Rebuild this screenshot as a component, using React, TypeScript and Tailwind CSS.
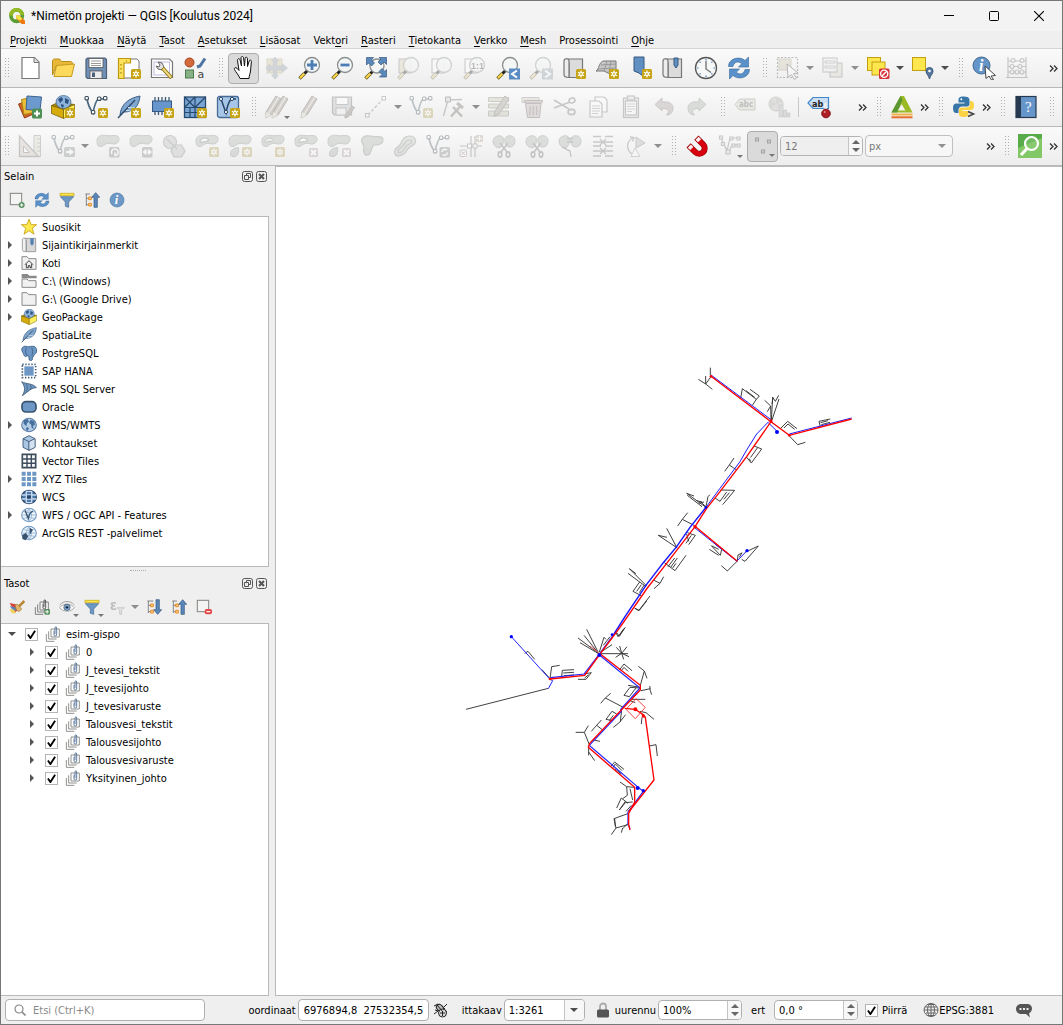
import React from "react";

/* ---------- shared icon fragments ---------- */

const Star = () => (
  <g>
    <rect x="14" y="13" width="10" height="10" rx="1.6" fill="#c7a416" />
    <path d="M19 14.6v6.8M16 16.3l6 3.4M22 16.3l-6 3.4" stroke="#fff" strokeWidth="1.3" />
    <circle cx="19" cy="18" r="1.9" fill="#fff" />
    <circle cx="19" cy="18" r="0.9" fill="#c7a416" />
  </g>
);
const Cross = () => (
  <g>
    <rect x="15" y="14" width="9" height="9" rx="1.5" fill="#c29a9a" />
    <path d="M17 16l5 5M22 16l-5 5" stroke="#fff" strokeWidth="2" />
  </g>
);
const Lens = ({ cx = 14, cy = 9, r = 7.5 }: { cx?: number; cy?: number; r?: number }) => (
  <g>
    <path d="M1.5 22.5l5-5" stroke="#6b5b14" strokeWidth="3.4" />
    <path d="M2 22l4.5-4.5" stroke="#fcd94f" strokeWidth="2" />
    <path d="M6.5 17.5l2.8-2.8" stroke="#222" strokeWidth="3" />
    <circle cx={cx} cy={cy} r={r} fill="#f4f6f6" fillOpacity="0.88" stroke="#8a8f8f" strokeWidth="1.3" />
  </g>
);
const Nodes = () => (
  <g>
    <path d="M3 4c1 6 3 10 6 14 1-5 2-11 5-14h6" fill="none" stroke="#4b6a80" strokeWidth="1.7" />
    <g fill="#fff" stroke="#3b4b58" strokeWidth="1.1">
      <rect x="1" y="1.5" width="3.4" height="3.4" rx="1" />
      <rect x="7.4" y="15.5" width="3.4" height="3.4" rx="1" />
      <rect x="13.5" y="2" width="3.4" height="3.4" rx="1" />
      <rect x="19.5" y="1.5" width="3.4" height="3.4" rx="1" />
    </g>
  </g>
);
const Blob = () => (
  <path
    d="M1 6.500C1 2 6 .5 10 1.500c4 1 8-1 11.500.5 3 2.500 1.500 7.500-3 8-3 .3-4.500-1.500-7.500-.5S7 13 4 12.500 1 9.500 1 6.500z"
    fill="#a9b4a3" stroke="#7c8484" strokeWidth="1"
  />
);
const Ring = () => (
  <g>
    <Blob />
    <path d="M5 7c1-3 4-3.500 7-2.500s1 3-2 3-5 2.500-5-.5z" fill="#fff" stroke="#6c7474" strokeWidth="1.200" />
  </g>
);
const Part = () => <path d="M2.500 20c0-4 3-6 8-6.500 1 5-1 9-4.500 9s-3.500-1-3.500-2.500z" fill="#a9b3a4" stroke="#7c8484" strokeWidth="1" />;
const Sheet = () => <path d="M4 1.500h12.500l4.500 4.500v16.500H4z" fill="#fff" stroke="#777" strokeWidth="1.2" />;
const Book = () => (
  <g>
    <path d="M4 3h16.500v18.500H7V7H4z" fill="#dcdcdc" stroke="#777" strokeWidth="1.2" />
    <path d="M7 21.500c-4 0-5-1-5-3V5c0-3 5-3 5 0z" fill="#ececec" stroke="#777" strokeWidth="1.2" />
  </g>
);
const Globe = () => (
  <g>
    <ellipse cx="12" cy="12" rx="11" ry="10" fill="#b4cde7" stroke="#5b7ca5" strokeWidth="1.600" />
    <path d="M4 5l6-2 2 4-3 2-1 5-4-4zM14 4l6 2 1 6-3 1 1 5-3-2-1-5-3-2zM9 15l3 2-2 4-3-3z" fill="#46719f" />
  </g>
);
const Grid2 = () => (
  <path d="M12 2v20M2 12h20M4 7q8 3 16 0M4 17q8-3 16 0M12 2q-8 10 0 20M12 2q8 10 0 20" fill="none" stroke="#8db1d6" strokeWidth="1.200" />
);
const Refresh = () => (
  <g fill="#5a91cb" stroke="#34659b" strokeWidth="0.600">
    <path d="M1.500 10.500c0-8 11-11 16.500-6l3.500-3.500v10h-10l3.300-3.300c-3.500-3-8-1.700-8.800 2.800z" />
    <path d="M22.500 13.500c0 8-11 11-16.500 6L2.500 23V13h10l-3.300 3.300c3.500 3 8 1.700 8.800-2.800z" />
  </g>
);
const Feather = () => (
  <g>
    <path d="M3 20C4 9 12 3 23 1c-1 10-6 16-16 16z" fill="#7fa6cf" stroke="#3d5f86" strokeWidth="1" />
    <path d="M1 23L18 5" stroke="#2e4a69" strokeWidth="1.300" />
    <path d="M9 15.500l5 .5M11 12.500l7 .5" stroke="#d3e2f0" strokeWidth="1" />
  </g>
);
const Box = () => (
  <g stroke="#6e5a00" strokeWidth="0.700">
    <path d="M0.500 10.500L8 7l15.500 2.500-11 5z" fill="#a68a12" />
    <ellipse cx="12.500" cy="7" rx="7.500" ry="6.500" fill="#8fb4dc" stroke="#3f6490" />
    <path d="M7 4l4-2 1 3-3 3zM14 3l4 2-1 4-3-1zM10 9l3 1-1 3-2-2z" fill="#2f5380" stroke="none" />
    <path d="M0.500 10.500l12 4v9l-12-5z" fill="#d6ac0c" />
    <path d="M12.500 14.500l11-5v8.500l-11 5.500z" fill="#fdf05c" />
  </g>
);
const Pencil = ({ x = 0 }: { x?: number }) => (
  <g transform={`translate(${x} 0)`}>
    <path d="M4 17L14 1l5 3L9 20l-6 3z" fill="#a08c76" stroke="#5d5146" />
    <path d="M6.500 18.500L16.500 2.500" stroke="#d8d0bf" strokeWidth="1.500" />
    <path d="M3 23l1-6 5 3z" fill="#e4d9bb" />
  </g>
);
const Scissors = () => (
  <g fill="none" stroke="#7d6c6c" strokeWidth="1.600">
    <path d="M8 9l7 9M16 9l-7 9" />
    <ellipse cx="8" cy="20.500" rx="1.800" ry="2.600" />
    <ellipse cx="16" cy="20.500" rx="1.800" ry="2.600" />
  </g>
);
const TwoBlobs = () => (
  <g fill="#aab3aa" stroke="#7c8484">
    <path d="M1 7c0-5 8-7 10-3.500 1 3 0 9-3 10S1 12 1 7zM13 4.500c2-4.500 10-3.500 10 2s-3 6.500-6 6.500-5-5-4-8.500z" />
  </g>
);

const icons: Record<string, React.ReactNode> = {
  new: <><Sheet /><path d="M16 1.500v5h5" fill="#ddd" stroke="#777" /></>,
  open: (
    <>
      <path d="M1.500 5c0-1 1-2 2-2h5l2 2.500h9c1 0 2 1 2 2V10H5L1.500 19z" fill="#e9b83a" stroke="#b98d1a" />
      <path d="M3 20.500L5.500 9.500 23.500 8l-3 12.500z" fill="#fcd95a" stroke="#c49a20" />
    </>
  ),
  save: (
    <>
      <path d="M2 3.500l1.500-1.500H21l1.500 1.500v19H3.500L2 21z" fill="#6f8fb5" stroke="#4c5f78" strokeWidth="1.200" />
      <rect x="5" y="2.500" width="14" height="9" fill="#fff" stroke="#555" strokeWidth="0.800" />
      <path d="M7 5h10M7 7.500h10M7 9.500h10" stroke="#999" />
      <rect x="6" y="15" width="12" height="7.500" fill="#ececec" stroke="#555" strokeWidth="0.800" />
      <rect x="8" y="16.500" width="3" height="4.500" fill="#4c5f78" />
    </>
  ),
  layout: (
    <>
      <path d="M2 3h18l2 2v17H2z" fill="#fff" stroke="#777" />
      <path d="M1.500 2.500h12v4.500H7v15.500H1.500z" fill="#fce15a" stroke="#c09810" strokeWidth="1.200" />
      <path d="M4 8v1.500M4 12v1.500M4 16v1.500M9 5h1" stroke="#927000" />
      <Star />
    </>
  ),
  manager: (
    <>
      <path d="M1.500 3h18l3 3v15.500h-21z" fill="#fff" stroke="#777" strokeWidth="1.200" />
      <rect x="4" y="6" width="15.500" height="13" fill="none" stroke="#bbd" />
      <path d="M8 6l4 1 2 4-2 3-4-1-2-3 3 1 1-2z" fill="#e3e3e3" stroke="#666" />
      <path d="M12.500 12l9 10" stroke="#8a7414" strokeWidth="4" />
      <path d="M13 12.500l8 9" stroke="#ecd57c" strokeWidth="2.200" />
    </>
  ),
  style: (
    <>
      <circle cx="6.500" cy="6.500" r="4.500" fill="#d4693b" stroke="#a3431b" />
      <path d="M14 11l3-1 5-7.500" stroke="#4d75a3" strokeWidth="3" fill="none" />
      <rect x="2.500" y="14" width="8" height="8" fill="#86b286" stroke="#4d7a50" />
      <text x="14.500" y="22" fontSize="11" fontFamily="DejaVu Sans" fill="#444">a</text>
    </>
  ),
  hand: (
    <path
      d="M8 22.500c-1-3-4-6-5.500-9-.6-1.600 1-2.500 2.400-1.300L7 14.500 5.500 4.500c-.3-2 2-2.400 2.500-.6L9.500 10 9 2c0-2 2.400-2 2.600 0L12.500 10l.6-7.500c.2-1.800 2.400-1.600 2.400.2L15.500 10.500l1.700-5.500c.6-1.600 2.500-1 2.200.7L18.500 15c-.3 3-1.500 5-1.500 7.500z"
      fill="#fff" stroke="#111" strokeWidth="1"
    />
  ),
  pan: (
    <>
      <rect x="2" y="3" width="15" height="14" fill="#d9c96e" stroke="#b5a860" />
      <path d="M10 1l3.500 4h-2v5h6V8l5 4-5 4v-2h-6v5h2L10 23l-3.500-4h2v-5h-4v2L1 12l3.500-4v2h4V5h-2z" fill="#8aa0b7" stroke="#6c7f92" strokeWidth="0.600" />
    </>
  ),
  zoomin: <><Lens /><path d="M14 4v10M9 9h10" stroke="#4c7db5" strokeWidth="2.800" /></>,
  zoomout: <><Lens /><path d="M9.500 9h9" stroke="#4c7db5" strokeWidth="2.800" /></>,
  full: (
    <>
      <Lens cx={13} cy={10} r={7} />
      <path d="M2.500 1.500h7L7.500 4l3 3-3 3-3-3-2 2zM22.500 1.500v7L20 6l-3 3-3-3 3-3-2-1.500zM22.500 21h-7l2.500-2.500-3-3 3-3 3 3 1.500-2z" fill="#5b88bb" stroke="#34577f" strokeWidth="0.700" />
    </>
  ),
  zoomsel: <><rect x="2" y="3" width="12" height="14" fill="#ded08c" stroke="#777" /><Lens /></>,
  zoomlayer: <><rect x="2" y="3" width="12" height="14" fill="#fff" stroke="#777" /><Lens /></>,
  zoom1: (
    <>
      <rect x="2" y="3" width="12" height="14" fill="#fff" stroke="#777" />
      <Lens />
      <text x="8" y="12.500" fontSize="9" fontWeight="bold" fontFamily="Liberation Sans" fill="#444">1:1</text>
    </>
  ),
  zoomprev: (
    <>
      <Lens /><rect x="13" y="12.500" width="11" height="11" fill="#5b8cc4" />
      <path d="M21 14.500L16 18l5 3.500" fill="none" stroke="#fff" strokeWidth="2" />
    </>
  ),
  zoomnext: (
    <>
      <Lens /><rect x="13" y="12.500" width="11" height="11" fill="#8a9fb7" />
      <path d="M16 14.500l5 3.500-5 3.500" fill="none" stroke="#fff" strokeWidth="2" />
    </>
  ),
  mapview: <><Book /><Star /></>,
  map3d: (
    <>
      <path d="M1 15c3-1 3-10 8-10h12v9l-6 4-6-3z" fill="#c6c6c6" stroke="#777" />
      <path d="M6 9l15-1M3 13l18-1M12 5l-3 10M16 5l-2 11" stroke="#999" fill="none" />
      <Star />
    </>
  ),
  bookmark: <><path d="M6 1h10v20l-5-4-5-2z" fill="#628fc2" stroke="#345880" /><Star /></>,
  bookmarks: <><Book /><path d="M13 2h4v7l-2 3-2-3z" fill="#628fc2" stroke="#345880" /></>,
  clock: (
    <>
      <circle cx="12" cy="12" r="10.500" fill="#f6f7f7" stroke="#555" strokeWidth="1.300" />
      <path d="M12 3v1.500M12 19.500V21M3 12h1.500M19.500 12H21M5.600 5.600l1 1M17.400 17.400l1 1M18.400 5.600l-1 1M6.600 17.400l-1 1" stroke="#4c7db5" strokeWidth="1.200" />
      <path d="M12 5v8l5 3.500" fill="none" stroke="#777" strokeWidth="1.400" />
    </>
  ),
  refresh: <Refresh />,
  select: (
    <>
      <rect x="1.500" y="1.500" width="20" height="20" fill="none" stroke="#555" strokeDasharray="2 1.500" strokeWidth="1.200" />
      <rect x="3" y="3" width="12" height="11" fill="#cfc493" stroke="#aaa070" />
      <path d="M11 8l11 9-4.500.6 3 4.400-2.200 1.500-2.800-4.700L12 21z" fill="#fff" stroke="#444" />
    </>
  ),
  form: (
    <>
      <rect x="9" y="7" width="12" height="14" fill="#ddd4b5" stroke="#777" />
      <rect x="2" y="2" width="14" height="14" fill="#eee" stroke="#777" />
      <path d="M4 5h10v2H4zM4 10h10v2H4z" fill="#fff" stroke="#888" />
    </>
  ),
  deselect: (
    <>
      <rect x="1.500" y="1.500" width="13" height="13" fill="#fde74c" stroke="#c4a010" />
      <rect x="6" y="6" width="13" height="13" fill="#fde74c" stroke="#c4a010" />
      <rect x="13" y="12.500" width="10.500" height="10.500" rx="1.500" fill="#d8343d" />
      <circle cx="18.200" cy="17.800" r="3.600" fill="none" stroke="#fff" strokeWidth="1.300" />
      <path d="M20.700 15.300l-5 5" stroke="#fff" strokeWidth="1.300" />
    </>
  ),
  selloc: (
    <>
      <rect x="1.500" y="1.500" width="13" height="13" fill="#fde74c" stroke="#c4a010" />
      <path d="M18.500 23c-1-4-3.500-5-3.500-8a3.500 3.500 0 017 0c0 3-2.500 4-3.500 8z" fill="#56789f" stroke="#3c5a7c" />
      <circle cx="18.500" cy="15" r="1.300" fill="#fff" />
    </>
  ),
  identify: (
    <>
      <circle cx="9.500" cy="9.500" r="8.500" fill="#6494c8" stroke="#40698f" />
      <text x="7" y="14.500" fontSize="16" fontStyle="italic" fontWeight="bold" fontFamily="Liberation Serif" fill="#fff">i</text>
      <path d="M13 10l10.500 9.500-4.500.5 2.500 3.500-2 .5-2.500-4-3 2.500z" fill="#fff" stroke="#444" />
    </>
  ),
  abacus: (
    <g fill="none" stroke="#707070" strokeWidth="1.200">
      <path d="M3 1v20M21 1v20M1 21.500h22M3 5h18M3 10.500h18M3 16h18" />
      <g fill="#eee"><circle cx="8" cy="4.500" r="2" /><circle cx="17" cy="4.500" r="2" /><circle cx="7" cy="10.500" r="2" /><circle cx="15" cy="10.500" r="2" /><circle cx="7" cy="16" r="2" /><circle cx="12" cy="16" r="2" /><circle cx="17" cy="16" r="2" /></g>
    </g>
  ),
  datasource: (
    <>
      <path d="M0.500 9l9-3 6 13-9 4z" fill="#d0622b" stroke="#94400f" />
      <path d="M3.500 4.500l10-2 2 15-9.500 2z" fill="#edbf38" stroke="#b08a12" />
      <path d="M9 1l14.500 1-1.500 13.500L8 14.500z" fill="#6d9ace" stroke="#3b638f" />
      <rect x="14" y="13.500" width="10" height="10" rx="1.500" fill="#4d8f54" />
      <path d="M19 15.500v6M16 18.500h6" stroke="#fff" strokeWidth="2" />
    </>
  ),
  geopackage: <><Box /><Star /></>,
  shapefile: <><Nodes /><Star /></>,
  spatialite: <><Feather /><Star /></>,
  memory: (
    <>
      <path d="M5 2v18M8.500 2v18M12 2v18M15.500 2v18M19 2v18" stroke="#3d5976" strokeWidth="1.300" />
      <rect x="2.500" y="6" width="19" height="10.500" fill="#6696cb" stroke="#345880" />
      <Star />
    </>
  ),
  mesh: (
    <>
      <rect x="1.500" y="2" width="21" height="20.500" fill="#79a5d4" stroke="#27496e" strokeWidth="1.300" />
      <path d="M12 2v20.500M1.500 12.500h21M1.500 2L12 12.500M12 2l-10.500 10.500M12 12.500L22.500 2M7 12.500v10M1.500 17.500h21" stroke="#27496e" strokeWidth="1.200" />
      <Star />
    </>
  ),
  virtual: (
    <>
      <rect x="1.500" y="1.500" width="21" height="21" rx="2" fill="#a7c6e7" stroke="#456a93" strokeWidth="1.300" />
      <path d="M5 4l5 14c1-6 2-10 5-14h5" fill="none" stroke="#274566" strokeWidth="1.500" />
      <g fill="#fff" stroke="#274566"><circle cx="5" cy="4" r="1.600" /><circle cx="10" cy="17" r="1.600" /><circle cx="16" cy="4" r="1.600" /></g>
      <Star />
    </>
  ),
  edits: <><Pencil x={-3} /><Pencil x={4} /></>,
  pencil: <Pencil />,
  saveedits: (
    <>
      <path d="M1.500 2h19v18h-17l-2-2z" fill="#b8bcc2" stroke="#666" strokeWidth="1.200" />
      <rect x="5" y="2.500" width="12" height="7" fill="#fff" stroke="#777" />
      <rect x="5" y="13" width="10" height="7" fill="#eee" stroke="#777" />
      <path d="M14 21l7-10 2.500 1.500L17 22l-3 1z" fill="#8f7c68" stroke="#6d5e4c" />
    </>
  ),
  digitize: (
    <>
      <path d="M4 20L19 4" stroke="#777" strokeDasharray="3 2" strokeWidth="1.300" />
      <rect x="1.500" y="18.500" width="3.500" height="3.500" fill="#fff" stroke="#777" />
      <rect x="18" y="1.500" width="3.500" height="3.500" fill="#fff" stroke="#777" />
    </>
  ),
  tools: (
    <>
      <path d="M1.500 21L6 5l14-.5" fill="none" stroke="#777" strokeWidth="1.400" />
      <path d="M3.500 2h5v5h-5z" fill="#ccc" stroke="#555" />
      <path d="M9 21.500l10-11M11 12l9 9.500" stroke="#786d58" strokeWidth="2.500" />
      <path d="M15 8l6 5" stroke="#786d58" strokeWidth="3" />
    </>
  ),
  attrs: (
    <>
      <path d="M1.500 2.500h20v4h-20zM1.500 9h20v4h-20zM1.500 16h20v5h-20z" fill="#c9c799" stroke="#84846a" />
      <path d="M8 16L18 1l4 3-10 15-5 2.500z" fill="#a39a86" stroke="#6d6458" />
    </>
  ),
  trash: (
    <>
      <path d="M2 2.500h17v5H2z" fill="#d6ceae" stroke="#888" />
      <path d="M5 8l-.500-2.500h18L22 8z" fill="#c0a3a3" stroke="#7c5b5b" />
      <path d="M5.500 8.500h15.500l-1.500 14h-12z" fill="#c9aeae" stroke="#7c5b5b" />
      <path d="M10 11v9M13.300 11v9M16.600 11v9" stroke="#8c6c6c" strokeWidth="1.300" />
    </>
  ),
  cut: (
    <g fill="none" stroke="#757575" strokeWidth="1.600">
      <path d="M1 5l15 9M1 13l16-6" />
      <ellipse cx="18.500" cy="17" rx="3.500" ry="2.600" /><ellipse cx="19" cy="5.500" rx="3" ry="2.400" transform="rotate(-20 19 5.500)" />
    </g>
  ),
  copy: (
    <g fill="#fff" stroke="#777" strokeWidth="1.200">
      <path d="M9 2h9l3 3v12H9z" /><path d="M4 6h9l3 3v13H4z" />
      <path d="M6 11h8M6 13.500h8M6 16h8M6 18.500h6" stroke="#999" />
    </g>
  ),
  paste: (
    <g fill="#ddd" stroke="#777" strokeWidth="1.200">
      <rect x="4.500" y="3" width="15" height="19.500" /><rect x="6.500" y="6" width="11" height="14" fill="#fff" />
      <rect x="8.500" y="1" width="7" height="4" />
      <path d="M8 9h8M8 11.500h8M8 14h8M8 16.500h5" stroke="#999" />
    </g>
  ),
  undo: <path d="M3 9.500l7-6.500v4c8-1 11.500 2.500 11 7-.5 4-3 6-6.500 6 3-3 3-6.500-4.500-6.500V16z" fill="#b39d9d" stroke="#8a7474" />,
  redo: <path d="M21 9.500l-7-6.500v4c-8-1-11.500 2.500-11 7 .5 4 3 6 6.500 6-3-3-3-6.500 4.500-6.500V16z" fill="#a6b3a6" stroke="#748674" />,
  abc: (
    <>
      <path d="M1 9.500l4.500-5.500h15.500v11H5.500z" fill="#d5d3b8" stroke="#88887c" />
      <text x="5" y="12" fontSize="8" fontWeight="bold" fontFamily="DejaVu Sans Condensed" fill="#555">abc</text>
    </>
  ),
  diagram: (
    <>
      <circle cx="9" cy="9" r="7" fill="#c7b9b0" stroke="#888" />
      <path d="M9 9V2a7 7 0 016.500 5zM9 9l-6 4a7 7 0 010-8z" fill="#9bab9b" />
      <path d="M12 10h4v12h-4zM16.500 15h3v7h-3zM20 18h3v4h-3z" fill="#a9b3b3" stroke="#848484" strokeWidth="0.700" />
    </>
  ),
  pin: (
    <>
      <path d="M1 8l5-5.500h15.500v11H6z" fill="#cce0f5" stroke="#4487c9" strokeWidth="1.200" />
      <text x="5" y="11.500" fontSize="9" fontWeight="bold" fontFamily="DejaVu Sans Condensed" fill="#222">ab</text>
      <path d="M18 8l1 8" stroke="#eee" strokeWidth="2.600" />
      <circle cx="19" cy="18.500" r="4.300" fill="#ae2028" stroke="#821219" />
      <circle cx="17.800" cy="17" r="1" fill="#dd8f92" />
    </>
  ),
  gispo: (
    <>
      <path d="M10.500 1h3.500l8.500 16.500H1.500z" fill="#9cba25" />
      <path d="M10.500 1L1.500 17.500H7L12.500 5z" fill="#5d9732" />
      <path d="M11.500 9l4 6.500H8z" fill="#f4f4f4" />
      <path d="M1.500 19.500h21" stroke="#f2b24b" strokeWidth="2" /><path d="M1.500 22.300h21" stroke="#e56f2e" strokeWidth="2" />
    </>
  ),
  python: (
    <>
      <path d="M11.500 1.500c-4 0-5 1.500-5 3.500v2.500h6v1H4.500C2 8.500 1 10 1 13s1 5 3 5h2.500v-3c0-2 1.500-3.500 3.500-3.500h5c1.600 0 2.500-1 2.500-2.500V5c0-2.500-2-3.500-6-3.500z" fill="#3976a8" />
      <path d="M11.500 22c4 0 5-1.500 5-3.500V16h-6v-1h8c2.500 0 3.500-1.500 3.500-4.500S21 6 19 6h-1v3c0 2-1.500 3.500-3.500 3.500h-5C8 12.500 7 13.500 7 15v3.500C7 21 8 22 11.500 22z" fill="#fcd345" />
      <circle cx="9.300" cy="4.300" r="1" fill="#fff" />
      <path d="M16 16.500l5.500 2.500-5.500 2.500" fill="none" stroke="#444" strokeWidth="1.600" />
    </>
  ),
  help: (
    <>
      <rect x="2" y="1.500" width="20" height="21" fill="#6695c9" stroke="#26394f" strokeWidth="1.200" />
      <rect x="2" y="1.500" width="5" height="21" fill="#26394f" />
      <text x="11" y="17" fontSize="15" fontFamily="Liberation Serif" fill="#fff">?</text>
    </>
  ),
  triangle: (
    <>
      <path d="M16 1.500h6.500v21H16z" fill="#dddcc0" stroke="#888" /><path d="M19 5h3M19 9h3M19 13h3M19 17h3" stroke="#888" />
      <path d="M1.500 2l19 20.500h-19z" fill="#d9c6bb" stroke="#7c6e6e" strokeWidth="1.300" /><path d="M5.500 12l6 6.500h-6z" fill="#fff" stroke="#7c6e6e" />
    </>
  ),
  moveNode: <><Nodes /><rect x="13" y="13" width="11" height="10" rx="1.500" fill="#8a8f94" /><path d="M15 17h3.500v-2.500L23 18l-4.500 3.500V19H15z" fill="#fff" /></>,
  rotate: <><Blob /><rect x="13" y="13" width="10.500" height="10.500" rx="1.500" fill="#83878b" /><path d="M16 20a3.300 3.300 0 112.500 1.500M19 18.500v3" fill="none" stroke="#fff" strokeWidth="1.500" /></>,
  scale: <><Blob /><rect x="13" y="13" width="10.500" height="10.500" rx="1.500" fill="#83878b" /><path d="M14 18l3-2.500v5zM22.500 18l-3-2.500v5zM16 18h5" fill="#fff" stroke="#fff" /></>,
  simplify: (
    <g fill="#b9beb9" stroke="#7c8484" strokeWidth="1.200">
      <circle cx="8" cy="8" r="6.500" /><path d="M12 11h7.500l3.500 6-3.500 6H12l-3-6z" /><path d="M5 5l10 10" />
    </g>
  ),
  addring: <><Ring /><Star /></>,
  addpart: <><Blob /><Part /><Star /></>,
  fillring: <><Blob /><path d="M4 7c1-3 4-3.500 7-2.500s1 3-2 3-5 2.500-5-.5z" fill="#ddd" stroke="#6c7474" /><Star /></>,
  delring: <><Ring /><Cross /></>,
  delpart: <><Blob /><Part /><Cross /></>,
  reshape: <path d="M1.500 6c2-6 9-4 13-3.500s9-1 8.500 4-6 4-9 4.500-2 9-6 10-5-4-4-7-3-4-2.500-8z" fill="#aab5a5" stroke="#7c8484" strokeWidth="1.200" />,
  offset: (
    <g fill="#c0c8b2" stroke="#7c8484" strokeWidth="1.200">
      <path d="M1.500 18c0-5 5-5 6-8s3-8 9-8 8 6 4 9-5 2-7 6-12 8-12 1z" /><path d="M5 17c0-3 4-3 5.500-6s3-5 6-5 3 3 0 4-4 3-6 6-5.500 4-5.500 1z" />
    </g>
  ),
  nodeRot: <><Nodes /><rect x="13.500" y="13" width="10.500" height="10.500" rx="1.500" fill="#83878b" /><path d="M16 18a3 3 0 015-2M21.500 18.500a3 3 0 01-5 2" fill="none" stroke="#fff" strokeWidth="1.600" /></>,
  trim: (
    <>
      <path d="M12 2v21M1 12h22M16 2v21" stroke="#777" strokeWidth="1.200" />
      <g fill="#fff" stroke="#777"><rect x="8.500" y="10" width="4" height="4" /><rect x="14" y="10" width="4" height="4" /></g>
      <rect x="17" y="1" width="7" height="7" rx="1" fill="#b5aa72" /><path d="M20.500 2v5M18 4.500h5" stroke="#fff" />
      <rect x="1" y="16" width="6.500" height="6.500" rx="1" fill="#fff" stroke="#a77" /><path d="M2.500 17.500l3.500 3.500M6 17.500L2.500 21" stroke="#a77" />
    </>
  ),
  split: <><TwoBlobs /><Scissors /></>,
  merge: <><TwoBlobs /><path d="M4 13l8 4 1 6M9 4.500h6M9 8h6" stroke="#777" strokeWidth="1.400" fill="none" /></>,
  align: (
    <g stroke="#777" strokeWidth="1.300" fill="none">
      <path d="M2 2.500h8M14 2.500h8M2 8h20M2 12h8M14 12h8M2 17h20M2 22h8M14 22h8M9 5l3 3 3-3M9 14l3 3 3-3M9 11l3-3 3 3M9 20l3-3 3 3" />
    </g>
  ),
  rotsym: (
    <>
      <path d="M8 20C2 16 2 7 9 4M6 3l4 .500-1.500 4" fill="none" stroke="#777" strokeWidth="1.300" />
      <path d="M12 3l9 6-9 5z" fill="#b0b8b0" stroke="#777" /><path d="M11 14l5 8.500H7z" fill="#fff" stroke="#999" />
    </>
  ),
  magnet: (
    <g fill="none" transform="translate(13.500 13.500) rotate(-45)">
      <path d="M-5.500-8.500V1a5.500 5.500 0 0011 0v-9.500" stroke="#9c0000" strokeWidth="6" />
      <path d="M-5.500-7.500V1a5.500 5.500 0 0011 0v-8.500" stroke="#d8000f" strokeWidth="4.600" />
      <path d="M-5.500-7.500v3.500M5.500-7.500v3.500" stroke="#f6f0f0" strokeWidth="4.400" />
    </g>
  ),
  snap: (
    <g fill="#ddd" stroke="#777" strokeWidth="1.200">
      <path d="M3 4l6 13 3-13h8M5 10l6 8 3-7h7" fill="none" />
      <path d="M1.500 2h3v3h-3zM3.500 8.500h3v3h-3zM12 3h3v3h-3zM19 3h3v3h-3zM14 10h3v3h-3zM19 10h3v3h-3zM8 16h4v4H8z" />
    </g>
  ),
  points: (
    <g fill="#ccc" stroke="#a4a4a4" strokeWidth="1.100"><path d="M4.500 4h3v3h-3zM16.500 6h3v3h-3zM10.500 16h3v3h-3z" /></g>
  ),
  green: (
    <>
      <rect width="24" height="24" fill="#57ab49" /><path d="M0 14L24 4v20H0z" fill="#83c867" />
      <circle cx="13.500" cy="9.500" r="6.500" fill="#8ccb78" fillOpacity="0.500" stroke="#fff" strokeWidth="2.200" />
      <path d="M9 14.500l-6 6.500" stroke="#fff" strokeWidth="3.200" />
    </>
  ),
  addbox: <><rect x="2" y="2" width="17" height="17" fill="#f4f4f4" stroke="#888a85" strokeWidth="1.600" /><circle cx="19" cy="19.500" r="4.500" fill="#5b9160" /><path d="M19 17v5M16.500 19.500h5" stroke="#fff" strokeWidth="1.500" /></>,
  rembox: <><rect x="2" y="2" width="17" height="17" fill="#f4f4f4" stroke="#888a85" strokeWidth="1.600" /><rect x="13" y="15" width="11" height="8" rx="3" fill="#e64545" /><path d="M15.500 19h6" stroke="#fff" strokeWidth="1.800" /></>,
  filter: <><path d="M1.500 2h21v3.500h-21z" fill="#fce94f" stroke="#c4a000" /><path d="M2 7h20l-7.500 8v8l-5-1.500V15z" fill="#6d97c4" stroke="#466a92" /></>,
  expr: <><text x="1" y="16" fontSize="20" fontWeight="bold" fontFamily="DejaVu Sans" fill="#777">ε</text><path d="M12 13h11l-4 4v6h-3v-6z" fill="#ccc" stroke="#777" /></>,
  collapse: <><path d="M2 3h7M3.500 3v18M3.500 9.500h5M3.500 19h5" stroke="#777" strokeWidth="1.300" fill="none" /><path d="M7 7.500h4v4H7zM7 17h4v4H7z" fill="#ffd49a" stroke="#e98a1a" strokeWidth="1.500" /><path d="M17.500 1l6 7h-3.500v15h-5V8h-3.500z" fill="#5b88bb" stroke="#2f5078" /></>,
  expand: <><path d="M2 3h9M3.500 3v18M3.500 9.500h5M3.500 19h5" stroke="#777" strokeWidth="1.300" fill="none" /><path d="M7 7.500h4v4H7zM7 17h4v4H7z" fill="#ffd49a" stroke="#e98a1a" strokeWidth="1.500" /><path d="M17.500 23l6-7h-3.500V1h-5v15h-3.500z" fill="#5b88bb" stroke="#2f5078" /></>,
  info: <><circle cx="12" cy="12" r="10.500" fill="#6d97c4" stroke="#4d78a8" /><text x="8.500" y="18.500" fontSize="19" fontStyle="italic" fontWeight="bold" fontFamily="Liberation Serif" fill="#fff">i</text></>,
  brush: <><path d="M1 6l9 2 5 6-6 7z" fill="#d8443c" /><path d="M1 11l7 1 3 3-3 4z" fill="#5b88bb" /><path d="M1 15l6 1 3 3-2 3-5-2z" fill="#f2cf52" /><path d="M9 9l4-1 6 7-4 4-4-3z" fill="#e2b770" stroke="#9a7632" /><path d="M15 11l8-8" stroke="#b98a3a" strokeWidth="4" /></>,
  group: (
    <g fill="none" stroke="#888a85" strokeWidth="1.400">
      <path d="M2 12v11h12M5.500 8v11.500h12" /><path d="M9 4.500h12.500v12H9z" fill="#fff" />
      <path d="M13.500 7v6.500c0 2 4 2 4 0V3c0-2.500-2.500-2.500-2.500 0v9" stroke="#4a6c94" strokeWidth="1.300" />
    </g>
  ),
  addgroup: (
    <g fill="none" stroke="#777" strokeWidth="1.400">
      <path d="M2 12v11h12M5.500 8v11.500h12" /><path d="M9 4.500h12.500v12H9z" fill="#f8f8f8" />
      <path d="M13.500 7v6.500c0 2 4 2 4 0V3c0-2.500-2.500-2.500-2.500 0v9" stroke="#444" strokeWidth="1.300" />
      <rect x="15.500" y="15" width="8.500" height="8.500" rx="2" fill="#5b9160" stroke="none" /><path d="M19.700 16.500v5.500M17 19.200h5.500" stroke="#fff" />
    </g>
  ),
  eye: <><path d="M1 13C6 6 18 6 23 13 18 20 6 20 1 13z" fill="#fafafa" stroke="#999" strokeWidth="1.200" /><circle cx="12" cy="12.500" r="4.800" fill="#7ba3ce" stroke="#456" /><circle cx="12" cy="12.500" r="1.800" fill="#123" /><path d="M1 9C7 2 17 2 23 9" fill="none" stroke="#a5a5a5" strokeWidth="1.500" /></>,
  fav: <path d="M12 0.500l3.300 8h8.200l-6.600 5.300 2.600 9L12 17.500l-7.500 5.300 2.600-9L0.500 8.500h8.200z" fill="#fce94f" stroke="#cba51c" strokeWidth="1.400" />,
  locbook: <><path d="M5 2h17v20H8V5H5z" fill="#d8d8d8" stroke="#8d8d8d" strokeWidth="1.200" /><path d="M7.500 22C3 22 2 21 2 19V4c0-3 5.500-3 5.500 0z" fill="#f0f0f0" stroke="#8d8d8d" strokeWidth="1.200" /><path d="M14 2h5v8l-2.500 3L14 10z" fill="#5580b3" /></>,
  home: <><path d="M1.500 2.500H9l2.500 3h11v16h-21z" fill="#f1f1f1" stroke="#8a8a8a" strokeWidth="1.500" /><path d="M6 14.500l6-6 6 6M8 13.500V19h3v-3h2.500v3H16v-5.500" fill="none" stroke="#333" strokeWidth="1.400" /></>,
  drive: <><path d="M1 1.500h9l2.500 2.500h11v4H1z" fill="#8a8a8a" /><path d="M1.500 9H9l2.500 2.500h11v10h-21z" fill="#f1f1f1" stroke="#8a8a8a" strokeWidth="1.500" /></>,
  folder: <path d="M1.500 2.500H9l2.500 3h11v16h-21z" fill="#f1f1f1" stroke="#8a8a8a" strokeWidth="1.500" />,
  gpkg: <Box />,
  feather: <Feather />,
  elephant: <><path d="M2 4c4-4 7-1 10-1.500s9-2 11 3-2 9-4 9.500c0 0 1 3-2 3v4c-1 2-5 2-5-1v-4l-3-1c-2 3-4 1-5-2S-.5 7 2 4z" fill="#6d97c4" stroke="#3d6189" strokeWidth="1.400" /><path d="M8 4c-2 5-1 8 1 12M16 4c2 4 2 8 0 12" fill="none" stroke="#3d6189" strokeWidth="1.300" /></>,
  hana: <><rect x="2" y="2" width="20" height="20" fill="none" stroke="#415a75" strokeWidth="2.500" strokeDasharray="2 2.500" /><rect x="5" y="5" width="14" height="14" fill="#6d97c4" /></>,
  mssql: <><path d="M1 1c6 4 17 2 22 9-8 0-12 6-21 12 5-8 4-14-1-21z" fill="#6d97c4" stroke="#415a75" strokeWidth="1.300" /><path d="M8 4c2 5 2 8 0 13M14 5.500c2 4 1 6 0 8" fill="none" stroke="#415a75" /></>,
  oracle: <rect x="1.500" y="4" width="21" height="15.500" rx="6" fill="#6d97c4" stroke="#39536f" strokeWidth="2.500" />,
  globe: <Globe />,
  cube: <><path d="M12 1l9 4.500v13L12 23l-9-4.500v-13z" fill="#a9c6e4" stroke="#415a75" strokeWidth="1.400" /><path d="M3 5.500l9 4.500 9-4.500M12 10v13" fill="none" stroke="#415a75" strokeWidth="1.400" /><path d="M12 10l9-4.500v13L12 23z" fill="#d3e2f1" stroke="#415a75" /></>,
  vtiles: <><path d="M2 2h20v20H2z" fill="#fff" stroke="#3c4c5d" strokeWidth="2.500" /><path d="M9 2v20M15.500 2v20M2 9h20M2 15.500h20" stroke="#3c4c5d" strokeWidth="2.200" /></>,
  xyz: <path d="M1 1h6v6H1zM9 1h6v6H9zM17 1h6v6h-6zM1 9h6v6H1zM9 9h6v6H9zM17 9h6v6h-6zM1 17h6v6H1zM9 17h6v6H9zM17 17h6v6h-6z" fill="#6d97c4" />,
  wcs: <><ellipse cx="12" cy="12" rx="11" ry="10" fill="#4f7aab" stroke="#28466a" strokeWidth="1.800" /><path d="M7 3.500h10M1.500 9h21M1.500 15h21M7 20.500h10M8 3v18M16 3v18" stroke="#c4d8ee" strokeWidth="2" /><path d="M9 9.500h6v5H9z" fill="#28466a" /></>,
  wfs: <><ellipse cx="12" cy="12" rx="11" ry="10" fill="#f1f6fb" stroke="#6d97c4" strokeWidth="1.600" /><Grid2 /><path d="M6 5l5 12c1-5 2-9 7-11" fill="none" stroke="#39536f" strokeWidth="2" /></>,
  arcgis: <><ellipse cx="12" cy="12" rx="11" ry="10" fill="#f1f6fb" stroke="#6d97c4" strokeWidth="1.600" /><Grid2 /><path d="M13 4l5 3-5 8zM2 15l5-3 4 5-4 6-5-2z" fill="#39536f" /></>,
};

function Icon({ name, small }: { name: string; small?: boolean }) {
  return (
    <svg viewBox="0 0 24 24" className={small ? "size-4 shrink-0" : "size-6 shrink-0"} aria-hidden="true">
      {icons[name]}
    </svg>
  );
}

/* ---------- toolbar parts ---------- */

const Handle = () => (
  <svg viewBox="0 0 12 20" className="h-5 w-3 shrink-0" stroke="#b0b0b0" strokeDasharray="1 2" aria-hidden="true">
    <path d="M4.500 0v20M7.500 0v20" />
  </svg>
);

const Caret = ({ dim }: { dim?: boolean }) => (
  <svg viewBox="0 0 8 4" className={dim ? "w-2 h-1 opacity-60" : "w-2 h-1"} aria-hidden="true">
    <path d="M0 0h8L4 4z" fill="#4d4d4d" />
  </svg>
);

const CornerCaret = () => (
  <svg viewBox="0 0 6 3" className="h-[3px] w-1.5" aria-hidden="true"><path d="M0 0h6L3 3z" fill="#777" /></svg>
);

type Tool = { i: string; label: string; off?: boolean; menu?: boolean; corner?: boolean; pressed?: boolean };

function ToolButton({ t }: { t: Tool }) {
  return (
    <div className="flex shrink-0 items-center">
      <button
        type="button"
        aria-label={t.label}
        disabled={t.off}
        className={
          t.pressed
            ? "relative mx-px flex h-[31px] w-[31px] items-center justify-center rounded-sm border border-[#adadad] bg-[#dadada]"
            : "relative mx-px flex h-[31px] w-[31px] items-center justify-center"
        }
      >
        <span className={t.off ? "opacity-35 saturate-50" : ""}>
          <Icon name={t.i} />
        </span>
        {t.corner && (
          <span className="absolute bottom-1 right-0.5 flex"><CornerCaret /></span>
        )}
      </button>
      {t.menu && (
        <button type="button" aria-label={`${t.label} valikko`} className="flex h-[31px] w-3 items-center justify-center">
          <Caret dim={t.off} />
        </button>
      )}
    </div>
  );
}

function Group({ tools, children }: { tools: Tool[]; children?: React.ReactNode }) {
  return (
    <div className="flex shrink-0 items-center">
      <Handle />
      {tools.map((t) => (
        <ToolButton key={t.label} t={t} />
      ))}
      {children}
    </div>
  );
}

const More = ({ label }: { label: string }) => (
  <button type="button" aria-label={label} className="flex w-[13px] shrink-0 justify-center">
    <svg viewBox="0 0 9 7" className="h-[7px] w-[9px]" aria-hidden="true">
      <path d="M1 .500l3 3-3 3M5 .500l3 3-3 3" fill="none" stroke="#333" strokeWidth="1.300" />
    </svg>
  </button>
);

const barClass =
  "flex h-[39px] shrink-0 items-center gap-1 overflow-hidden border-b border-[#b9b9b9] bg-linear-to-b from-[#fafafa] to-[#ededed]";

const fileTools: Tool[] = [
  { i: "new", label: "Uusi projekti" }, { i: "open", label: "Avaa projekti" }, { i: "save", label: "Tallenna projekti" },
  { i: "layout", label: "Uusi tuloste" }, { i: "manager", label: "Tulosteiden hallinta" }, { i: "style", label: "Tyylien hallinta" },
];
const navTools: Tool[] = [
  { i: "hand", label: "Panoroi karttaa", pressed: true }, { i: "pan", label: "Panoroi valintaan", off: true },
  { i: "zoomin", label: "Lähennä" }, { i: "zoomout", label: "Loitonna" }, { i: "full", label: "Koko laajuus" },
  { i: "zoomsel", label: "Zoomaa valintaan", off: true }, { i: "zoomlayer", label: "Zoomaa tasoon", off: true },
  { i: "zoom1", label: "Alkuperäinen tarkkuus", off: true }, { i: "zoomprev", label: "Edellinen näkymä" },
  { i: "zoomnext", label: "Seuraava näkymä", off: true }, { i: "mapview", label: "Uusi karttanäkymä" },
  { i: "map3d", label: "Uusi 3D-näkymä" }, { i: "bookmark", label: "Uusi kirjanmerkki" },
  { i: "bookmarks", label: "Näytä kirjanmerkit" }, { i: "clock", label: "Aikaohjain" }, { i: "refresh", label: "Päivitä" },
];
const selectTools: Tool[] = [
  { i: "select", label: "Valitse kohteita", off: true, menu: true }, { i: "form", label: "Valitse arvolla", off: true, menu: true },
  { i: "deselect", label: "Poista valinta", menu: true }, { i: "selloc", label: "Valitse sijainnilla", menu: true },
];
const attrTools: Tool[] = [{ i: "identify", label: "Tunnista kohteet" }, { i: "abacus", label: "Kenttälaskin", off: true }];
const sourceTools: Tool[] = [
  { i: "datasource", label: "Tietolähteiden hallinta" }, { i: "geopackage", label: "Uusi GeoPackage" },
  { i: "shapefile", label: "Uusi Shapefile" }, { i: "spatialite", label: "Uusi SpatiaLite" },
  { i: "memory", label: "Uusi väliaikainen taso" }, { i: "mesh", label: "Uusi mesh-taso" }, { i: "virtual", label: "Uusi virtuaalitaso" },
];
const editTools: Tool[] = [
  { i: "edits", label: "Nykyiset muokkaukset", off: true, corner: true }, { i: "pencil", label: "Muokkaustila", off: true },
  { i: "saveedits", label: "Tallenna muokkaukset", off: true }, { i: "digitize", label: "Digitoi", off: true, menu: true },
  { i: "shapefile", label: "Lisää kohde", off: true }, { i: "tools", label: "Taitepistetyökalu", off: true, menu: true },
  { i: "attrs", label: "Muokkaa ominaisuuksia", off: true }, { i: "trash", label: "Poista valitut", off: true },
  { i: "cut", label: "Leikkaa", off: true }, { i: "copy", label: "Kopioi", off: true }, { i: "paste", label: "Liitä", off: true },
  { i: "undo", label: "Kumoa", off: true }, { i: "redo", label: "Tee uudelleen", off: true },
];
const labelTools: Tool[] = [{ i: "abc", label: "Nimiöt", off: true }, { i: "diagram", label: "Kaaviot", off: true }];
const advTools: Tool[] = [
  { i: "triangle", label: "Edistynyt digitointi", off: true }, { i: "moveNode", label: "Siirrä kohde", off: true, menu: true },
  { i: "rotate", label: "Kierrä kohde", off: true }, { i: "scale", label: "Skaalaa kohde", off: true },
  { i: "simplify", label: "Yksinkertaista", off: true }, { i: "addring", label: "Lisää rengas", off: true },
  { i: "addpart", label: "Lisää osa", off: true }, { i: "fillring", label: "Täytä rengas", off: true },
  { i: "delring", label: "Poista rengas", off: true }, { i: "delpart", label: "Poista osa", off: true },
  { i: "reshape", label: "Muotoile uudelleen", off: true }, { i: "offset", label: "Siirrä käyrää", off: true },
  { i: "nodeRot", label: "Käännä viiva", off: true }, { i: "trim", label: "Trimmaa", off: true },
  { i: "split", label: "Jaa kohteet", off: true }, { i: "split", label: "Jaa osat", off: true },
  { i: "merge", label: "Yhdistä kohteet", off: true }, { i: "align", label: "Yhdistä ominaisuudet", off: true },
  { i: "rotsym", label: "Kierrä symboleja", off: true, menu: true },
];
const snapTools: Tool[] = [
  { i: "magnet", label: "Tarttuminen" }, { i: "snap", label: "Tarttumistila", off: true, corner: true },
  { i: "points", label: "Taitepiste", corner: true, pressed: true },
];

const Spin = () => (
  <span className="flex w-3.5 flex-col items-center justify-center gap-1 border-l border-[#c4c4c4] bg-[#f7f7f7]" aria-hidden="true">
    <svg viewBox="0 0 8 4" className="h-1 w-2"><path d="M0 4h8L4 0z" fill="#666" /></svg>
    <svg viewBox="0 0 8 4" className="h-1 w-2"><path d="M0 0h8L4 4z" fill="#666" /></svg>
  </span>
);

/* ---------- menu ---------- */

const menus: [string, string, string][] = [
  ["", "P", "rojekti"], ["", "M", "uokkaa"], ["", "N", "äytä"], ["", "T", "asot"], ["", "A", "setukset"], ["", "L", "isäosat"],
  ["Vekt", "o", "ri"], ["", "R", "asteri"], ["", "T", "ietokanta"], ["", "V", "erkko"], ["", "M", "esh"], ["Prosessointi", "", ""], ["", "O", "hje"],
];

/* ---------- side panels ---------- */

const browser: [string, string, boolean][] = [
  ["fav", "Suosikit", false], ["locbook", "Sijaintikirjainmerkit", true], ["home", "Koti", true],
  ["drive", "C:\\ (Windows)", true], ["folder", "G:\\ (Google Drive)", true], ["gpkg", "GeoPackage", true],
  ["feather", "SpatiaLite", false], ["elephant", "PostgreSQL", false], ["hana", "SAP HANA", false],
  ["mssql", "MS SQL Server", false], ["oracle", "Oracle", false], ["globe", "WMS/WMTS", true], ["cube", "Kohtaukset", false],
  ["vtiles", "Vector Tiles", false], ["xyz", "XYZ Tiles", true], ["wcs", "WCS", false],
  ["wfs", "WFS / OGC API - Features", true], ["arcgis", "ArcGIS REST -palvelimet", false],
];
const layers = ["0", "J_tevesi_tekstit", "J_tevesijohto", "J_tevesivaruste", "Talousvesi_tekstit", "Talousvesijohto", "Talousvesivaruste", "Yksityinen_johto"];

const Right = () => (
  <svg viewBox="0 0 4 8" className="h-2 w-1" aria-hidden="true"><path d="M0 0v8l4-4z" fill="#555" /></svg>
);

function Check({ id }: { id: string }) {
  return (
    <span className="grid size-[13px] shrink-0 place-items-center">
      <input id={id} type="checkbox" defaultChecked className="size-[13px] appearance-none border border-[#b4b4b4] bg-white [grid-area:1/1]" />
      <svg viewBox="0 0 10 10" className="pointer-events-none size-[9px] [grid-area:1/1]" aria-hidden="true">
        <path d="M1 5l2.800 4L9 0.800" fill="none" stroke="#000" strokeWidth="2" />
      </svg>
    </span>
  );
}

function PanelTitle({ title }: { title: string }) {
  return (
    <div className="flex h-5 shrink-0 items-center pl-[3px] pr-2">
      <h2 className="flex-1">{title}</h2>
      <button type="button" aria-label={`Irrota ${title}`} className="mr-[3px]">
        <svg viewBox="0 0 11 11" className="size-[11px]" fill="none" stroke="#555" aria-hidden="true">
          <rect x=".5" y=".5" width="10" height="10" rx="2" /><path d="M4.500 4.500v-2h4v4h-2M2.500 4.500h4v4h-4z" />
        </svg>
      </button>
      <button type="button" aria-label={`Sulje ${title}`}>
        <svg viewBox="0 0 11 11" className="size-[11px]" fill="none" stroke="#555" aria-hidden="true">
          <rect x=".5" y=".5" width="10" height="10" rx="2" /><path d="M3 3l5 5M8 3l-5 5" strokeWidth="2" />
        </svg>
      </button>
    </div>
  );
}

function PanelTool({ i, label, off, corner }: { i: string; label: string; off?: boolean; corner?: boolean }) {
  return (
    <button type="button" aria-label={label} disabled={off} className="relative flex h-6 w-[25px] items-center justify-center">
      <span className={off ? "opacity-40" : ""}><Icon name={i} small /></span>
      {corner && (
        <span className="absolute bottom-0.5 right-0 flex"><CornerCaret /></span>
      )}
    </button>
  );
}

/* ---------- map ---------- */

function NetworkMap() {
  return (
    <svg className="size-full" role="img" aria-label="Vesijohtoverkoston kartta">
      <g transform="translate(-276 -167)" fill="none">
        {/* upper network */}
        <g transform="translate(600 350) scale(0.33333)">
          <g stroke="#333" strokeWidth="2.800">
            <path d="M331 53v22M333 80l-16 22-22-14M317 102l20 16M317 102v-24" />
            <path d="M422 145l5-29 42 32-12 18M469 148l9-10-28-20M438 122l26 20" />
            <path d="M513 212l-1-44-18-17M512 168l-10 17M514 212l4-70 8 12 10-18M516 210l21-63M519 142l-3 20" />
            <path d="M541 236l22-22 28 22M552 234l12-12 20 16M568 258l25 26 23-7" />
            <path d="M661 230l-4-16 34-7M664 224l26-7M662 218l22-6" />
            <path d="M462 288l23 9-31 42-15-18M452 322l20-28M448 326l4 8" />
            <path d="M410 360l-22-15-14 19M388 345l14-21" />
            <path d="M362 420l42 1-36 43M345 444l15 10 20-28M372 448l16-20" />
            <path d="M318 472l-58-42 22 8M262 436l44 34M320 472l-20-18M318 470l6-30 6-6M296 460l16-4M290 452l16 4" />
            <path d="M282 526l-35-18-14 20M247 508l16-20" />
            <path d="M232 594l-57-38 26 6M230 592l-30-57" />
            <path d="M262 548l24 8-20 28M260 552l6 22M274 556l-16 24" />
            <path d="M193 638l32 24 33-46M232 624l-20 28M224 624l-20 26M228 640l-10 14" />
            <path d="M140 708l-52-52 20 15M84 670l54 40M125 738l-26-14 20-28M118 728l14-22M110 724l14-20" />
            <path d="M160 690l20 10-18 16M180 700l11-20M104 774l12 8 34-44" />
            <path d="M333 586l28 30 4-18-20-16M328 598l28 18M336 588l20 10" />
            <path d="M412 633l-30 30-18-16M412 633l2-18 12-6M425 628l10 6 40-46-38 18M418 622l8-14" />
            <path d="M48 848l6 12 22-28M60 854l10-16" />
          </g>
          <g stroke="#1a1aff" strokeWidth="3">
            <path d="M333 75L513 209M568 252L755 204M506 215L470 252 440 300 420 335 360 415 318 472" />
            <path d="M505 218l26 26M412 632l29-30M285 534l127 101" />
            <path d="M318 472L270 532 230 590 190 638 140 703 75 800 42 852" strokeWidth="4.500" />
          </g>
          <path d="M333 79L513 215 568 256 755 207M513 215L440 320 360 425 320 475 285 530 200 640 142 714 60 832M285 529L412 634" stroke="#f00" strokeWidth="4" />
          <g fill="#00f"><circle cx="531" cy="246" r="6" /><circle cx="441" cy="602" r="5" /><circle cx="318" cy="472" r="4" /></g>
          <g fill="#f00"><circle cx="513" cy="213" r="5" /><circle cx="568" cy="256" r="4" /><circle cx="285" cy="530" r="5" /><circle cx="333" cy="79" r="4" /></g>
        </g>
        {/* lower network */}
        <g transform="translate(440 600) scale(0.33333)">
          <g stroke="#333" strokeWidth="2.800">
            <path d="M78 328l247-63" />
            <path d="M254 160l10-6 20 24M330 236l-25-28M330 236l5-36 24-4" />
            <path d="M365 230l2-19 35-2M372 227l30-2M370 219l32-2M432 222l22-4-16 20h-24M446 224l-12 10" />
            <path d="M476 160l-36-72M476 160l-62-46M474 160l-54-32M474 158l-42-52M478 156l14-44 6 6M480 158l36-24M490 136l20-26" />
            <path d="M482 161h82M545 160l-16-18M545 160l16-20M545 160l-18 12M545 160l6 18M545 160l22 10M545 160l-6-22" />
            <path d="M620 3l-22 28-14-6M530 98l8 11 16-25" />
            <path d="M538 210l14-18 24 20M544 212l8-10 12 12" />
            <path d="M601 256l12-43-18-14M613 213l8 22M603 272l28-6-2-8M629 266l6 18" />
            <path d="M602 262l-38-6M600 264l-30-2-18 24 16 4 20-26M590 280l-18 22M576 298h40M570 302l16 6" />
            <path d="M550 322l-54-28M496 294l-14 16M496 294l16-14M545 328l-4 38M540 366l-20 16M541 364l16-20" />
            <path d="M530 342l-14-8-18 24 20 4M520 346l-12 16M488 390l-18-14-16 18M470 376l14-16" />
            <path d="M448 434l-15-37h-26M433 397l12-20M460 420l20 4M446 444v22M446 456l18 26" />
            <path d="M512 500l12-14 28 22M518 504l8-12 20 20M524 506l20 16" />
            <path d="M600 334l18 4 24 20M606 352l-2 20M604 342l10 8M628 438l20-4 4 34" />
            <path d="M582 562l-22-2-20-14M560 560l2 26-14 10M570 566l8 34M578 606l-22 2-18 22M564 610l-20-16-14 30M556 604l-18 26M574 616l-16 18" />
            <path d="M566 640l-44 16 6 28-14 20M528 684l36-10M524 656l2 24M548 684l-4 14M564 670l-16 16" />
          </g>
          <path d="M214 110L330 238 338 242 325 266" stroke="#22f" strokeWidth="3" />
          <path d="M522 102L478 162 432 222 332 233M482 168L600 264 542 328 544 334 448 436 592 560 610 574 564 636 564 672 570 686" stroke="#22f" strokeWidth="3.500" />
          <path d="M540 82L480 162 434 226 330 237M480 161L601 256V270L449 430 445 442 584 562 584 606 566 640 566 674 570 690" stroke="#f00" strokeWidth="4" />
          <path d="M554 325L586 328 610 344 616 352 642 540 566 636" stroke="#f00" strokeWidth="4" />
          <path d="M588 296l28 26-30 34-28-28z" stroke="#e22" strokeWidth="2.500" />
          <path d="M478 160l-28-22" stroke="#f66" strokeWidth="3" />
          <g fill="#00f"><circle cx="214" cy="110" r="5" /><circle cx="478" cy="165" r="6" /><circle cx="593" cy="564" r="6" /><circle cx="610" cy="572" r="5" /><circle cx="516" cy="104" r="4" /></g>
          <g fill="#f00"><circle cx="330" cy="237" r="4" /><circle cx="586" cy="328" r="6" /><circle cx="610" cy="348" r="5" /></g>
        </g>
      </g>
    </svg>
  );
}

/* ---------- window ---------- */

export default function App() {
  return (
    <div className="flex min-h-screen flex-col border border-[#767676] bg-[#efefef] font-['DejaVu_Sans_Condensed','DejaVu_Sans',sans-serif] text-[11px] leading-[15px] text-black">
      <header className="flex h-[30px] shrink-0 items-center bg-[#f3f3f3] pl-2">
        <svg viewBox="0 0 24 24" className="size-4" aria-hidden="true">
          <circle cx="11.500" cy="11.500" r="8.500" fill="none" stroke="#5a9e33" strokeWidth="5.500" />
          <path d="M3 11.500a8.500 8.500 0 0117-1" fill="none" stroke="#93b924" strokeWidth="5.500" />
          <path d="M11 11h4.500l8.500 8v5h-5l-8-8z" fill="#ee7913" /><path d="M11 11h4l5 5-4 3-5-4z" fill="#f0e64a" />
        </svg>
        <h1 className="ml-1.5 flex-1 font-['Roboto','Open_Sans',sans-serif] text-[12px] leading-4">*Nimetön projekti — QGIS [Koulutus 2024]</h1>
        <button type="button" aria-label="Pienennä" className="flex h-full w-[45px] items-center justify-center">
          <svg viewBox="0 0 10 10" className="size-2.5" aria-hidden="true"><path d="M0 4.500h10" stroke="#000" /></svg>
        </button>
        <button type="button" aria-label="Suurenna" className="flex h-full w-[45px] items-center justify-center">
          <svg viewBox="0 0 10 10" className="size-2.5" aria-hidden="true"><rect x=".5" y=".5" width="9" height="9" rx="1" fill="none" stroke="#000" /></svg>
        </button>
        <button type="button" aria-label="Sulje" className="flex h-full w-[46px] items-center justify-center">
          <svg viewBox="0 0 10 10" className="size-2.5" aria-hidden="true"><path d="M0 0l10 10M10 0L0 10" stroke="#000" strokeWidth="1.100" /></svg>
        </button>
      </header>

      <nav className="flex h-[18px] shrink-0 items-center gap-[13px] border-b border-[#d4d4d4] pl-[9px] pt-0.5">
        {menus.map(([a, u, b]) => (
          <button type="button" key={a + u + b}>
            {a}<span className="underline underline-offset-2">{u}</span>{b}
          </button>
        ))}
      </nav>

      <div className={barClass}>
        <Group tools={fileTools} />
        <Group tools={navTools} />
        <Group tools={selectTools} />
        <Group tools={attrTools} />
        <div className="ml-auto flex pr-0.5"><More label="Lisää ominaisuustyökaluja" /></div>
      </div>
      <div className={barClass}>
        <Group tools={sourceTools} />
        <Group tools={editTools} />
        <Group tools={labelTools}>
          <div className="mx-[3px] h-5 w-px bg-[#c8c8c8]" />
          <ToolButton t={{ i: "pin", label: "Kiinnitä nimiöt" }} />
          <div className="w-[21px]" />
          <More label="Lisää nimiötyökaluja" />
        </Group>
        <Group tools={[{ i: "gispo", label: "Lisäosa" }]}><More label="Lisää lisäosia" /></Group>
        <Group tools={[{ i: "python", label: "Python-konsoli" }]}><More label="Lisää Python-työkaluja" /></Group>
        <Group tools={[{ i: "help", label: "Ohjesisältö" }]} />
        <Handle />
      </div>
      <div className={barClass}>
        <Group tools={advTools} />
        <Group tools={snapTools}>
          <div className="ml-px flex h-5 w-[83px] overflow-hidden rounded-sm border border-[#b4b4b4] bg-[#f7f7f7]">
            <input aria-label="Toleranssi" disabled defaultValue="12" className="min-w-0 flex-1 bg-[#efefef] pl-1 text-[#777]" />
            <Spin />
          </div>
          <div className="ml-0.5 grid h-[22px] w-[88px] items-center">
            <select aria-label="Yksikkö" disabled className="h-full appearance-none rounded-sm border border-[#c0c0c0] bg-[#f7f7f7] pl-[3px] text-[#777] opacity-100 [grid-area:1/1]">
              <option>px</option>
            </select>
            <span className="pointer-events-none flex justify-end pr-[7px] [grid-area:1/1]"><Caret dim /></span>
          </div>
        </Group>
        <div className="ml-auto flex items-center gap-1">
          <More label="Lisää tarttumistyökaluja" />
          <Group tools={[{ i: "green", label: "Hae" }]}>
            <div className="flex pl-px pr-0.5"><More label="Lisää hakutyökaluja" /></div>
          </Group>
        </div>
      </div>

      <div className="flex flex-1">
        <aside className="flex w-[274px] shrink-0 flex-col">
          <section aria-label="Selain" className="flex flex-col">
            <PanelTitle title="Selain" />
            <div className="mb-0.5 flex h-7 items-center pl-[3px]">
              <PanelTool i="addbox" label="Lisää valitut tasot" />
              <PanelTool i="refresh" label="Päivitä selain" />
              <PanelTool i="filter" label="Suodata selain" />
              <PanelTool i="collapse" label="Supista kaikki" />
              <PanelTool i="info" label="Ominaisuudet" />
            </div>
            <ul className="mr-1.5 h-[351px] overflow-hidden border border-l-0 border-[#b9b9b9] bg-white pt-px">
              {browser.map(([i, label, arrow]) => (
                <li key={label} className="flex h-[18px] items-center">
                  <button type="button" aria-label={`Laajenna ${label}`} className={arrow ? "ml-[7px] w-[13px]" : "invisible ml-[7px] w-[13px]"}><Right /></button>
                  <Icon name={i} small />
                  <span className="ml-[5px]">{label}</span>
                </li>
              ))}
            </ul>
          </section>
          <div className="flex h-1.5 items-center justify-center"><div className="w-4 border-t border-dotted border-[#aaa]" /></div>
          <section aria-label="Tasot" className="flex flex-1 flex-col">
            <PanelTitle title="Tasot" />
            <div className="mb-0.5 flex h-7 items-center pl-[3px]">
              <PanelTool i="brush" label="Tasojen tyyli" />
              <PanelTool i="addgroup" label="Lisää ryhmä" />
              <PanelTool i="eye" label="Karttateemat" corner />
              <PanelTool i="filter" label="Suodata tasoja" corner />
              <PanelTool i="expr" label="Suodata lausekkeella" off />
              <span className="flex w-3 justify-center"><Caret dim /></span>
              <PanelTool i="expand" label="Laajenna kaikki" />
              <PanelTool i="collapse" label="Supista tasot" />
              <PanelTool i="rembox" label="Poista taso" />
            </div>
            <ul className="mr-1.5 flex-1 border border-l-0 border-[#b9b9b9] bg-white pt-px">
              <li className="flex h-[18px] items-center">
                <button type="button" aria-label="Supista esim-gispo" className="ml-[7px] flex w-[17px]"><Caret /></button>
                <Check id="layer-root" />
                <span className="ml-[7px] flex"><Icon name="group" small /></span>
                <label htmlFor="layer-root" className="ml-[5px]">esim-gispo</label>
              </li>
              {layers.map((l) => (
                <li key={l} className="flex h-[18px] items-center">
                  <button type="button" aria-label={`Laajenna ${l}`} className="ml-[29px] w-[15px]"><Right /></button>
                  <Check id={`layer-${l}`} />
                  <span className="ml-[7px] flex"><Icon name="group" small /></span>
                  <label htmlFor={`layer-${l}`} className="ml-[5px]">{l}</label>
                </li>
              ))}
            </ul>
          </section>
        </aside>
        <main className="min-w-0 flex-1 border border-[#b9b9b9] border-r-0 bg-white">
          <NetworkMap />
        </main>
      </div>

      <footer className="flex h-7 shrink-0 items-center pl-1">
        <div className="flex h-[22px] w-[200px] shrink-0 items-center rounded-sm border border-[#b0b0b0] bg-white pl-2">
          <svg viewBox="0 0 12 12" className="size-3" fill="none" stroke="#888" aria-hidden="true"><circle cx="5" cy="5" r="4" strokeWidth="1.200" /><path d="M8 8l3.500 3.500" strokeWidth="1.600" /></svg>
          <input aria-label="Etsi" placeholder="Etsi (Ctrl+K)" className="ml-[7px] min-w-0 flex-1 placeholder:text-[#8a8a8a]" />
        </div>
        <label htmlFor="coord" className="ml-auto">oordinaat</label>
        <input id="coord" defaultValue="6976894,8  27532354,5" className="ml-0.5 h-[22px] w-[131px] rounded-sm border border-[#b0b0b0] bg-white pl-[5px]" />
        <button type="button" aria-label="Kartan laajuus" className="ml-1">
          <svg viewBox="0 0 16 16" className="size-4" fill="none" stroke="#222" aria-hidden="true">
            <path d="M1 4l4-2 9 8M2 8l3 1M6 2l6 5M1 12l4-3M14 2l-3 3" /><ellipse cx="7" cy="6" rx="4" ry="3" transform="rotate(45 7 6)" fill="#bbb" /><circle cx="9.500" cy="11" r="4" fill="#ddd" /><path d="M4 3l6 7M7 11h5M9.500 9v5" />
          </svg>
        </button>
        <label htmlFor="scale" className="ml-[13px]">ittakaav</label>
        <div className="ml-0.5 flex h-[22px] w-[81px] overflow-hidden rounded-sm border border-[#b0b0b0] bg-white">
          <input id="scale" defaultValue="1:3261" className="min-w-0 flex-1 pl-1" />
          <button type="button" aria-label="Valitse mittakaava" className="flex w-5 items-center justify-center border-l border-[#c4c4c4] bg-[#f7f7f7]"><Caret /></button>
        </div>
        <button type="button" aria-label="Lukitse mittakaava" className="ml-3">
          <svg viewBox="0 0 12 16" className="h-4 w-3" aria-hidden="true"><path d="M3 8V4.500a3 3 0 016 0V8" fill="none" stroke="#aaa" strokeWidth="1.800" /><rect y="7.500" width="12" height="8" rx="1.500" fill="#555" /></svg>
        </button>
        <label htmlFor="mag" className="ml-1.5">uurennu</label>
        <div className="ml-0.5 flex h-5 w-[84px] overflow-hidden rounded-sm border border-[#b0b0b0] bg-white">
          <input id="mag" defaultValue="100%" className="min-w-0 flex-1 pl-1" /><Spin />
        </div>
        <label htmlFor="rot" className="ml-[9px] w-5">ert</label>
        <div className="ml-[3px] flex h-5 w-[84px] overflow-hidden rounded-sm border border-[#b0b0b0] bg-white">
          <input id="rot" defaultValue="0,0 °" className="min-w-0 flex-1 pl-1" /><Spin />
        </div>
        <div className="ml-[7px] flex items-center"><Check id="render" /><label htmlFor="render" className="ml-1">Piirrä</label></div>
        <button type="button" className="ml-4 flex items-center">
          <svg viewBox="0 0 16 14" className="h-3.5 w-4" fill="none" stroke="#666" aria-hidden="true"><path d="M1 7h14M2 4h12M3 10h10M5 1.500h6M5 12.500h6M8 .500v13" /><ellipse cx="8" cy="7" rx="7" ry="6.500" /><ellipse cx="8" cy="7" rx="3.500" ry="6.500" /></svg>
          EPSG:3881
        </button>
        <button type="button" aria-label="Viestit" className="ml-[22px] mr-[30px]">
          <svg viewBox="0 0 16 15" className="h-[15px] w-4" aria-hidden="true"><path d="M5 1h6c3 0 5 2 5 4.500S14 10 13 10.500l1 4-4-3.500H5C2 11 0 8.500 0 6s2-5 5-5z" fill="#555" /><path d="M3.500 5h2v2h-2zM7 5h2v2H7zM10.500 5h2v2h-2z" fill="#eee" /></svg>
        </button>
      </footer>
    </div>
  );
}
